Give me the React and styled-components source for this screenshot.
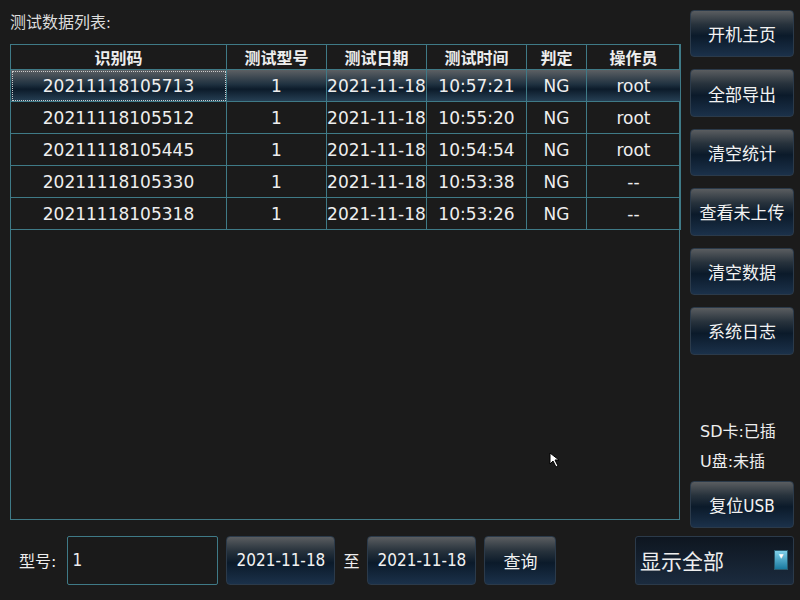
import React from "react";
import styled, { createGlobalStyle } from "styled-components";

const Global = createGlobalStyle`
  html, body { margin: 0; padding: 0; background: #1b1b1b; }
  body { font-family: "DejaVu Sans", "Noto Sans CJK SC", sans-serif; font-stretch: condensed; color: #eee; }
`;

const Page = styled.div`
  width: 800px; height: 600px; position: relative; overflow: hidden;
  display: grid; grid-template-columns: 690px 110px; grid-template-rows: 528px 72px;
`;
const Left = styled.div`
  padding: 12px 0 0 10px; display: flex; flex-direction: column;
`;
const Title = styled.div`font-size: 16px; height: 21px; line-height: 21px; margin-bottom: 11px; color: #ddd;`;
const Frame = styled.div`
  width: 668px; height: 474px; border: 1px solid #3f7a87; box-sizing: content-box;
`;
const Table = styled.table`
  border-collapse: collapse; width: 670px; margin: -1px; table-layout: fixed;
  th, td { border: 1px solid #3f7a87; text-align: center; padding: 0; }
  th { height: 23px; font-size: 16px; font-weight: bold; font-stretch: normal; }
  td { height: 31px; font-size: 17px; font-stretch: normal; }
`;
const Row = styled.tr`
  background: ${p => p.$sel ? "linear-gradient(#5c6064 0%, #1f3140 45%, #0c1b2a 60%, #284257 100%)" : "transparent"};
  td:first-child { outline: ${p => p.$sel ? "1px dotted #ccc" : "none"}; outline-offset: -2px; }
`;
const Side = styled.div`
  padding: 10px 6px 0 0; display: flex; flex-direction: column; gap: 12px;
`;
const Btn = styled.button`
  width: ${p => p.$w || 104}px; height: ${p => p.$h || 48}px;
  border: 1px solid #2b3a4a; border-radius: 4px; color: #f2f2f2;
  background: linear-gradient(#5a5d60 0%, #27323c 30%, #0b1a2a 55%, #1b314a 100%);
  font-family: inherit; font-stretch: condensed; font-size: 17px; padding: 0;
`;
const Status = styled.div`
  margin-top: 50px; padding-left: 10px; font-size: 16px; line-height: 30px;
  font-stretch: normal;
`;
const Bottom = styled.div`
  grid-column: 1 / 3; display: flex; align-items: center; padding: 0 6px 0 19px; gap: 8px;
  margin-top: -8px;
`;
const Label = styled.span`font-size: 16px; font-stretch: normal; margin-right: ${p => p.$mr || 0}px;`;
const Input = styled.div`
  width: 151px; height: 49px; border: 1px solid #3f7a87; border-radius: 2px; box-sizing: border-box;
  display: flex; align-items: center; padding-left: 4px; font-size: 17px; background: #1a1a1a;
`;
const Select = styled.div`
  margin-left: auto; width: 159px; height: 49px; box-sizing: border-box; border: 1px solid #2b3a4a; border-radius: 3px;
  background: linear-gradient(#0e1620, #1b2b3e); display: flex; align-items: center; justify-content: space-between;
  padding: 0 5px 0 4px; font-size: 21px; font-stretch: normal;
`;
const Arrow = styled.div`
  width: 12px; height: 18px; background: linear-gradient(#7fd0ea, #1a7aa0); border: 1px solid #2a5b6e;
  display: flex; align-items: flex-start; justify-content: center; font-size: 6px; color: #fff; line-height: 10px;
`;
const Cursor = styled.svg`position: absolute; left: 549px; top: 452px;`;

const rows = [
  ["20211118105713","1","2021-11-18","10:57:21","NG","root"],
  ["20211118105512","1","2021-11-18","10:55:20","NG","root"],
  ["20211118105445","1","2021-11-18","10:54:54","NG","root"],
  ["20211118105330","1","2021-11-18","10:53:38","NG","--"],
  ["20211118105318","1","2021-11-18","10:53:26","NG","--"],
];
const widths = [216,100,100,100,60,94];

export default function App() {
  return (
    <Page>
      <Global />
      <Left>
        <Title>测试数据列表:</Title>
        <Frame>
          <Table>
            <colgroup>{widths.map((w,i)=><col key={i} style={{width:w}}/>)}</colgroup>
            <thead><tr>{["识别码","测试型号","测试日期","测试时间","判定","操作员"].map(h=><th key={h}>{h}</th>)}</tr></thead>
            <tbody>{rows.map((r,i)=><Row key={i} $sel={i===0}>{r.map((c,j)=><td key={j}>{c}</td>)}</Row>)}</tbody>
          </Table>
        </Frame>
      </Left>
      <Side>
        {["开机主页","全部导出","清空统计","查看未上传","清空数据","系统日志"].map(t=><Btn key={t}>{t}</Btn>)}
        <Status>SD卡:已插<br/>U盘:未插</Status>
        <Btn style={{marginTop:-8}}>复位USB</Btn>
      </Side>
      <Bottom>
        <Label $mr={3}>型号:</Label>
        <Input>1</Input>
        <Btn $w={109} $h={49}>2021-11-18</Btn>
        <Label>至</Label>
        <Btn $w={109} $h={49}>2021-11-18</Btn>
        <Btn $w={72} $h={49}>查询</Btn>
        <Select>显示全部<Arrow>▼</Arrow></Select>
      </Bottom>
      <Cursor width="14" height="16" viewBox="0 0 14 16">
        <path d="M1 1 L1 12 L4 9 L7 15 L9 14 L6 8 L10 8 Z" fill="#fff" stroke="#000" strokeWidth="1"/>
      </Cursor>
    </Page>
  );
}
